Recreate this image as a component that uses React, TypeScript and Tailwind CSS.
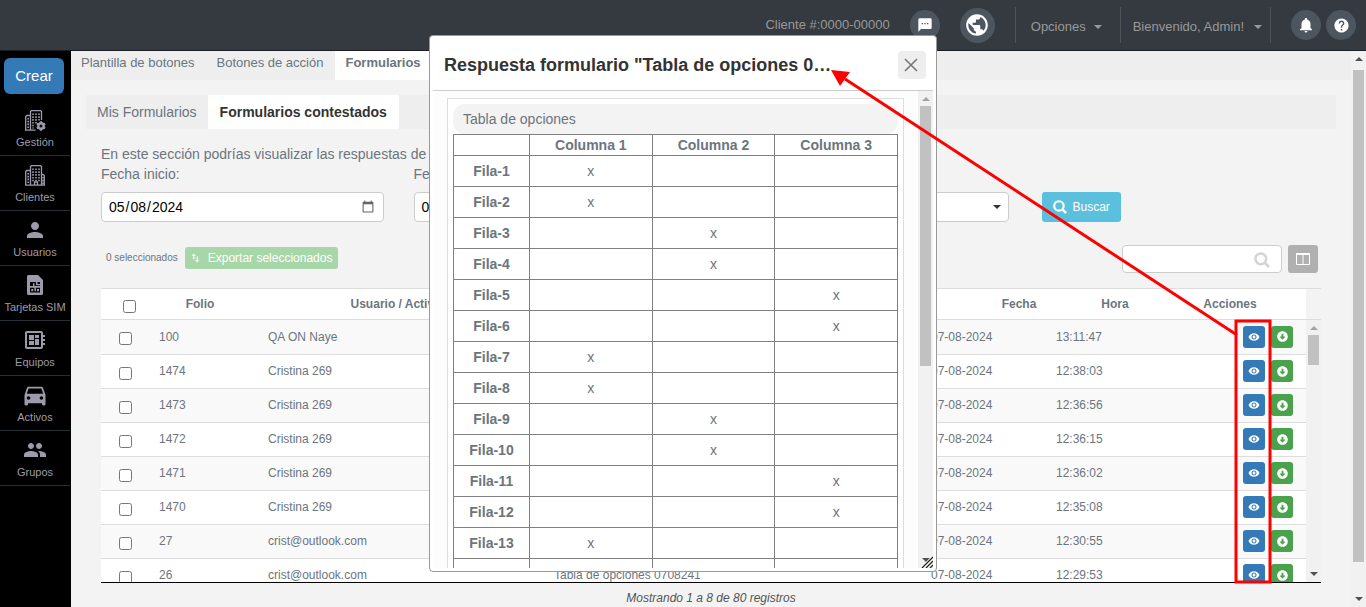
import type { ReactNode } from "react";
import {
  MdDeveloperBoard,
  MdDirectionsCar,
  MdGroup,
  MdHelp,
  MdNotifications,
  MdPerson,
  MdPublic,
  MdRemoveRedEye,
  MdSms,
} from "react-icons/md";
import { FaArrowAltCircleDown } from "react-icons/fa";

const menu = [
  { label: "Gestión", icon: <ManagementIcon /> },
  { label: "Clientes", icon: <BuildingIcon /> },
  { label: "Usuarios", icon: <MdPerson size={24} /> },
  { label: "Tarjetas SIM", icon: <SimIcon /> },
  { label: "Equipos", icon: <MdDeveloperBoard size={24} /> },
  { label: "Activos", icon: <MdDirectionsCar size={28} /> },
  { label: "Grupos", icon: <MdGroup size={24} /> },
];

const records = [
  { folio: "100", user: "QA ON Naye", time: "13:11:47" },
  { folio: "1474", user: "Cristina 269", time: "12:38:03" },
  { folio: "1473", user: "Cristina 269", time: "12:36:56" },
  { folio: "1472", user: "Cristina 269", time: "12:36:15" },
  { folio: "1471", user: "Cristina 269", time: "12:36:02" },
  { folio: "1470", user: "Cristina 269", time: "12:35:08" },
  { folio: "27", user: "crist@outlook.com", time: "12:30:55" },
  { folio: "26", user: "crist@outlook.com", time: "12:29:53" },
];

// column marked in each row of the answered form
const answers = [1, 1, 2, 2, 3, 3, 1, 1, 2, 2, 3, 3, 1, 1];

export default function App() {
  return (
    <div className="relative flex h-screen flex-col overflow-hidden bg-[#f3f3f3] font-['Liberation_Sans',Arial,sans-serif] text-sm text-[#6c757d]">
      <Header />
      <div className="flex min-h-0 flex-1">
        <Sidebar />
        <main className="min-w-0 flex-1 overflow-hidden">
          <Tabs />
          <div className="px-[15px] pt-[15px]">
            <SubTabs />
            <Filters />
            <Toolbar />
            <Records />
          </div>
        </main>
        <Scrollbar thumb="mt-[9px] h-[492px]" dark />
      </div>
      <AnswerDialog />
      <Annotation />
    </div>
  );
}

function Header() {
  return (
    <header className="flex h-[51px] shrink-0 items-center justify-end border-b border-[#1b1f23] bg-[#343a40] pr-[10px] text-[13px] text-[#999]">
      <span className="mr-5">Cliente #:0000-00000</span>
      <RoundButton label="Mensajes" className="size-[30px]">
        <MdSms size={16} />
      </RoundButton>
      <RoundButton label="Idioma" className="ml-5 size-[35px]">
        <MdPublic size={26} />
      </RoundButton>
      <button className="ml-5 flex h-9 items-center gap-2 border-l border-[#4e5357] pt-1 pr-[18px] pl-[15px]">
        Opciones <Caret />
      </button>
      <button className="flex h-9 items-center gap-[10px] border-x border-[#4e5357] pt-1 pr-2 pl-3">
        Bienvenido, Admin! <Caret />
      </button>
      <RoundButton label="Notificaciones" className="ml-5 size-[30px]">
        <MdNotifications size={18} />
      </RoundButton>
      <RoundButton label="Ayuda" className="ml-[5px] size-[30px]">
        <MdHelp size={17} />
      </RoundButton>
    </header>
  );
}

function RoundButton({
  label,
  className,
  children,
}: {
  label: string;
  className: string;
  children: ReactNode;
}) {
  return (
    <button
      aria-label={label}
      className={`flex shrink-0 items-center justify-center rounded-full bg-[#4d565e] text-white ${className}`}
    >
      {children}
    </button>
  );
}

function Caret() {
  return <span className="border-x-4 border-t-4 border-x-transparent border-t-current" />;
}

function Sidebar() {
  return (
    <nav className="w-[71px] shrink-0 bg-black pr-px">
      <button className="mx-1 mt-[7px] mb-[7px] h-9 w-[60px] rounded-md bg-[#337ab7] text-[15px] text-white">
        Crear
      </button>
      {menu.map((item) => (
        <a
          key={item.label}
          href="#"
          className="flex h-[55px] flex-col items-center border-b border-[#243033] pt-[7px] text-[11px] text-[#9c9ca8]"
        >
          <span className="flex h-6 items-center text-[#9d9bab]">{item.icon}</span>
          <span className="mt-[2px] leading-4 whitespace-nowrap">{item.label}</span>
        </a>
      ))}
    </nav>
  );
}

function Tabs() {
  return (
    <div className="flex h-[29px] bg-[#eee] text-[13px] leading-6">
      <a href="#" className="px-[10px]">Plantilla de botones</a>
      <a href="#" className="px-3">Botones de acción</a>
      <a href="#" className="bg-white px-[10px] font-bold">Formularios</a>
    </div>
  );
}

function SubTabs() {
  return (
    <div className="flex h-[34px] bg-[#eee] leading-[34px]">
      <a href="#" className="px-[11px]">Mis Formularios</a>
      <a href="#" className="bg-white px-3 font-bold text-[#333]">Formularios contestados</a>
    </div>
  );
}

function Filters() {
  return (
    <div className="pt-[15px]">
      <p className="px-[15px] leading-5">
        En este sección podrías visualizar las respuestas de los formularios.
      </p>
      <div className="grid grid-cols-4 items-end">
        <DateField id="start" label="Fecha inicio:" value="2024-05-08" />
        <DateField id="end" label="Fecha fin:" value="2024-07-08" />
        <div className="flex flex-col px-[15px]">
          <label htmlFor="form" className="mb-2 leading-5">Formulario:</label>
          <div className="relative">
            <select
              id="form"
              className="h-[30px] w-full appearance-none rounded border border-[#ccc] bg-white px-2 text-black"
            >
              <option></option>
            </select>
            <span className="pointer-events-none absolute top-[13px] right-2 text-[#333]">
              <span className="block border-x-4 border-t-4 border-x-transparent border-t-current" />
            </span>
          </div>
        </div>
        <div className="px-[18px]">
          <button className="flex h-[30px] items-center gap-[6px] rounded-[3px] bg-[#5bc0de] px-[11px] text-xs text-white">
            <SearchIcon size={14} />
            Buscar
          </button>
        </div>
      </div>
    </div>
  );
}

function DateField({ id, label, value }: { id: string; label: string; value: string }) {
  return (
    <div className="flex flex-col px-[15px]">
      <label htmlFor={id} className="mb-2 leading-5">{label}</label>
      <input
        id={id}
        type="date"
        defaultValue={value}
        className="h-[30px] w-full rounded border border-[#ccc] bg-white px-[6px] text-black [&::-webkit-calendar-picker-indicator]:opacity-60"
      />
    </div>
  );
}

function Toolbar() {
  return (
    <div className="flex items-center px-[15px] pt-[23px] pb-[15px]">
      <div className="flex items-center gap-[7px] pb-[2px] pl-[5px]">
        <span className="text-[10px]">0 seleccionados</span>
        <button className="flex h-[22px] items-center gap-2 rounded-[3px] bg-[#a7d6a8] px-[6px] text-xs text-white">
          <SwapIcon />
          Exportar seleccionados
        </button>
      </div>
      <div className="relative ml-auto">
        <input
          aria-label="Buscar registro"
          className="block h-7 w-40 rounded border border-[#ccc] bg-white px-2 text-xs"
        />
        <span className="absolute top-[7px] right-3 text-[#d2d4d6]">
          <SearchIcon size={16} />
        </span>
      </div>
      <button
        aria-label="Columnas"
        className="mr-[3px] ml-[6px] flex h-7 w-[30px] items-center justify-center rounded-[3px] bg-[#b0b0b0] text-white"
      >
        <ColumnsIcon />
      </button>
    </div>
  );
}

function Records() {
  return (
    <section className="px-[15px] text-xs">
      <div className="border-y border-[#ddd] pr-[15px]">
        <table className="w-full table-fixed bg-white">
          <thead>
            <tr className="h-[30px]">
              <th className="w-14 pt-1">
                <input type="checkbox" aria-label="Seleccionar todos" className="mx-auto block size-[13px]" />
              </th>
              <th className="w-[86px]">Folio</th>
              <th className="w-[306px]">Usuario / Activo</th>
              <th>Formulario</th>
              <th className="w-[106px]">Fecha</th>
              <th className="w-[86px]">Hora</th>
              <th className="w-[148px] pr-1">Acciones</th>
            </tr>
          </thead>
        </table>
      </div>
      <div className="flex h-[263px] border-b border-black">
        <div className="min-w-0 flex-1 overflow-hidden">
          <table className="w-full table-fixed">
            <tbody>
              {records.map((row) => (
                <tr key={row.folio} className="h-[34px] border-b border-[#ddd] odd:bg-[#f9f9f9] even:bg-white">
                  <td className="w-[50px] pt-1 pl-[18px]">
                    <input type="checkbox" aria-label={`Seleccionar ${row.folio}`} className="block size-[13px]" />
                  </td>
                  <td className="w-[109px] px-2">{row.folio}</td>
                  <td className="w-[286px] px-2">{row.user}</td>
                  <td className="px-2">Tabla de opciones 0708241</td>
                  <td className="w-[125px] px-2">07-08-2024</td>
                  <td className="w-[187px] px-2">{row.time}</td>
                  <td className="w-[71px] pl-2">
                    <div className="flex gap-[6px]">
                      <button
                        aria-label="Ver respuesta"
                        className="flex size-[22px] items-center justify-center rounded-[3px] bg-[#337ab7] text-white"
                      >
                        <MdRemoveRedEye size={12} />
                      </button>
                      <button
                        aria-label="Descargar"
                        className="flex size-[22px] items-center justify-center rounded-[3px] bg-[#4ba24c] text-white"
                      >
                        <FaArrowAltCircleDown size={11} />
                      </button>
                    </div>
                  </td>
                </tr>
              ))}
            </tbody>
          </table>
        </div>
        <Scrollbar thumb="mt-[5px] h-[30px]" />
      </div>
      <p className="pt-[7px] text-center leading-4 text-[#555] italic">
        Mostrando 1 a 8 de 80 registros
      </p>
    </section>
  );
}

function Scrollbar({ thumb, dark }: { thumb: string; dark?: boolean }) {
  return (
    <div className="flex w-[15px] shrink-0 flex-col items-center bg-[#f1f1f1] py-[6px]">
      <span
        className={`border-x-4 border-b-4 border-x-transparent ${dark ? "border-b-[#505050]" : "border-b-[#a3a3a3]"}`}
      />
      <span className={`w-[11px] shrink-0 bg-[#c1c1c1] ${thumb}`} />
      <span className="mt-auto border-x-4 border-t-4 border-x-transparent border-t-[#505050]" />
    </div>
  );
}

function AnswerDialog() {
  return (
    <div
      role="dialog"
      aria-labelledby="dialog-title"
      className="absolute top-[35px] left-1/2 flex h-[537px] w-[508px] -translate-x-1/2 flex-col rounded border border-[#999] bg-white p-[3px]"
    >
      <div className="flex h-[52px] shrink-0 items-center justify-between border-b border-[#ccc] pr-[7px] pl-[11px]">
        <h2 id="dialog-title" className="text-lg font-bold text-[#333]">
          Respuesta formulario "Tabla de opciones 0…
        </h2>
        <button
          aria-label="Cerrar"
          className="flex size-7 items-center justify-center rounded bg-[#eee] pr-[2px] text-[#777]"
        >
          <svg width="14" height="14" viewBox="0 0 14 14" fill="none" stroke="currentColor" strokeWidth="1.6">
            <path d="M1 1l12 12M13 1L1 13" />
          </svg>
        </button>
      </div>
      <div className="relative flex min-h-0 flex-1">
        <div className="min-w-0 flex-1 overflow-hidden bg-[#fdfdfd] px-[14px] pt-[7px]">
          <div className="border border-[#ddd] bg-white p-[5px]">
            <div className="rounded-xl bg-[#f3f3f3] px-[10px] leading-[30px]">Tabla de opciones</div>
            <table className="w-full table-fixed border-collapse text-center">
              <thead>
                <tr className="h-[21px] leading-5">
                  <th className="w-[76px] border border-[#808080]" />
                  <th className="border border-[#808080]">Columna 1</th>
                  <th className="border border-[#808080]">Columna 2</th>
                  <th className="border border-[#808080]">Columna 3</th>
                </tr>
              </thead>
              <tbody>
                {answers.map((answer, i) => (
                  <tr key={i} className="h-[31px]">
                    <th className="border border-[#808080]">Fila-{i + 1}</th>
                    {[1, 2, 3].map((col) => (
                      <td key={col} className="border border-[#808080]">
                        {answer === col && "x"}
                      </td>
                    ))}
                  </tr>
                ))}
              </tbody>
            </table>
          </div>
        </div>
        <Scrollbar thumb="mt-[5px] h-[260px]" />
        <svg className="absolute right-0 bottom-0" width="12" height="12" viewBox="0 0 12 12" fill="none">
          <path d="M1 12L12 1M5 12l7-7M9 12l3-3" stroke="#fff" strokeWidth="2.6" />
          <path d="M1 12L12 1M5 12l7-7M9 12l3-3" stroke="#222" strokeWidth="1.3" />
        </svg>
      </div>
    </div>
  );
}

function Annotation() {
  return (
    <svg className="pointer-events-none absolute inset-0 size-full" fill="none" stroke="red">
      <rect x="1236" y="321" width="34" height="261" strokeWidth="3" />
      <path d="M1237 335L845 79" strokeWidth="3" />
      <path d="M831 70l19 2-10 14z" fill="red" stroke="none" />
    </svg>
  );
}

function SearchIcon({ size }: { size: number }) {
  return (
    <svg width={size} height={size} viewBox="0 0 16 16" fill="none" stroke="currentColor">
      <circle cx="6.8" cy="6.8" r="5.4" strokeWidth="2.5" />
      <path d="M10.8 10.8l4.2 4.2" strokeWidth="2.8" />
    </svg>
  );
}

function SwapIcon() {
  return (
    <svg width="9" height="10" viewBox="0 0 9 10" fill="currentColor">
      <path d="M2.8 0.5L5 3H3.4v3.5H2.2V3H0.6z" />
      <path d="M6.2 9.5L4 7h1.6V3.5h1.2V7h1.6z" />
    </svg>
  );
}

function ColumnsIcon() {
  return (
    <svg width="14" height="12" viewBox="0 0 14 12" fill="none" stroke="currentColor">
      <path d="M.5.5h13v11H.5zM7 1v10" />
      <path d="M0 1h14" strokeWidth="2" />
    </svg>
  );
}

function BuildingIcon() {
  return (
    <svg width="20" height="21" viewBox="0 0 20 21" fill="none" stroke="currentColor" strokeWidth="1.3">
      <path d="M5.5 20V1.5L6.5.7h9l1 .8V20M5.5 5.5H1.8L.7 6.5V20M16.5 9.5H18l1.3 1V20M0 20.2h20" />
      <path d="M8 3.5v13M11 3.5v13M14 3.5v13M3.2 8v11M18 12v8" strokeWidth="1.6" strokeDasharray="1.6 1.2" />
      <path d="M9.5 20v-3h3v3" />
    </svg>
  );
}

function ManagementIcon() {
  return (
    <svg width="21" height="21" viewBox="0 0 21 21" fill="none" stroke="currentColor" strokeWidth="1.3">
      <path d="M5.5 20V1.5L6.5.7h9l1 .8V10M5.5 5.5H1.8L.7 6.5V20M0 20.2h10.5" />
      <path d="M8 3.5v15M11 3.5v10M14 3.5v7M3.2 8v11" strokeWidth="1.6" strokeDasharray="1.6 1.2" />
      <circle cx="16" cy="16" r="2.7" strokeWidth="2.4" />
      <path
        d="M16 11.2v2M16 18.8v2M11.9 13.6l1.7 1M18.4 17.4l1.7 1M11.9 18.4l1.7-1M18.4 14.6l1.7-1"
        strokeWidth="2.2"
      />
    </svg>
  );
}

function SimIcon() {
  return (
    <svg width="16" height="20" viewBox="0 0 16 20" fill="currentColor">
      <path d="M1.5 0H11l5 5v13.5a1.5 1.5 0 0 1-1.5 1.5h-13A1.5 1.5 0 0 1 0 18.5v-17A1.5 1.5 0 0 1 1.5 0z" />
      <path d="M3 7h10v10.500H3z" fill="#000" />
      <path d="M3 11h10v1.700H3zM6 8.200h1.500V11H6zM9 7h1.500v2H13v1.200H9zM4.200 14h2v2.300h-2zM7.400 12.700h1.500v3.600H7.400zM10 14h2v2.300h-2z" />
    </svg>
  );
}
